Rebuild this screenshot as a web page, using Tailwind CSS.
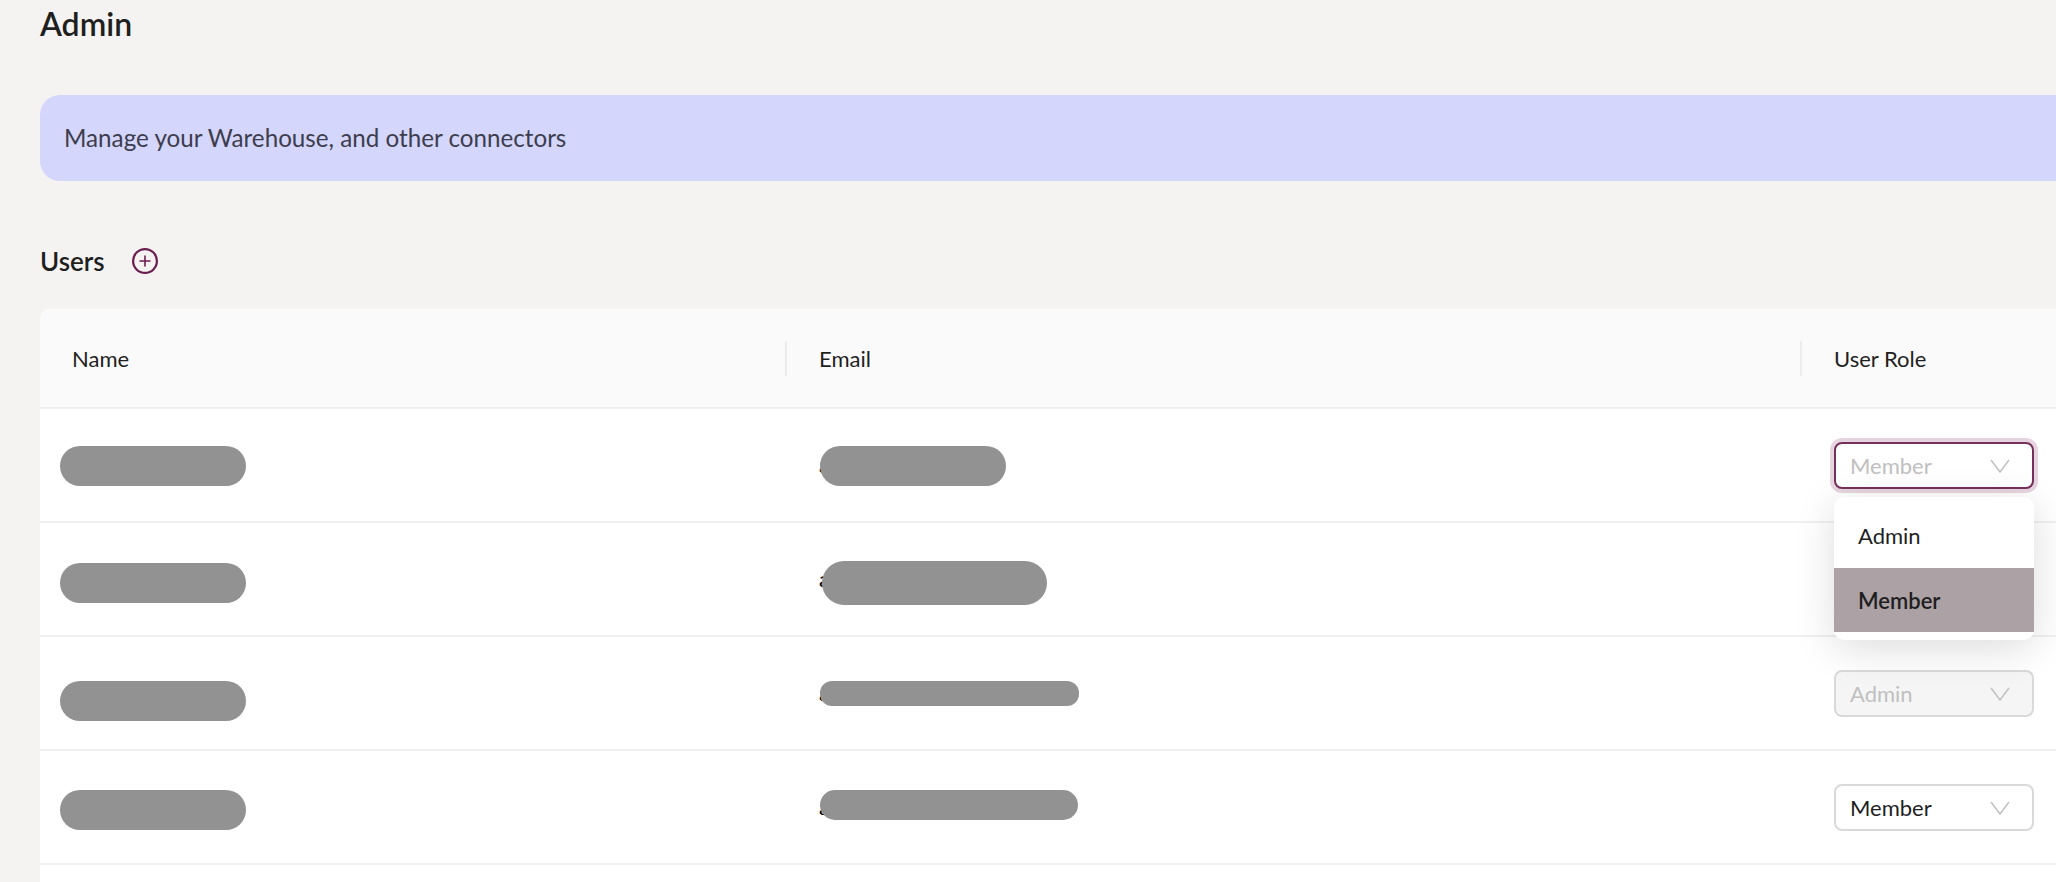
<!DOCTYPE html>
<html lang="en">
  <head>
    <meta charset="UTF-8" />
    <title>Admin</title>
    <script src="https://cdn.jsdelivr.net/npm/@tailwindcss/browser@4"></script>
  </head>
  <body class="h-[882px] overflow-hidden bg-[#f4f3f1] font-['Lato',sans-serif] text-[#1f1f1f]">
    <main class="pl-10 pt-[6px]">
      <h1 class="text-[32px] leading-[36px] font-semibold">Admin</h1>

      <!-- Banner -->
      <div class="mt-[53px] flex h-[86px] items-center rounded-l-[20px] bg-[#d4d6fb] pl-6">
        <p class="text-[24.2px] text-[#3d3d4e]">Manage your Warehouse, and other connectors</p>
      </div>

      <!-- Users heading -->
      <div class="mt-[64px] flex h-[32px] items-center gap-[27px]">
        <h2 class="text-[26px] font-semibold">Users</h2>
        <svg class="h-[26px] w-[26px] text-[#6b1d4f]" viewBox="0 0 26 26" fill="none" stroke="currentColor" stroke-width="2.2">
          <circle cx="13" cy="13" r="11.9" />
          <path stroke-width="1.6" d="M13 7.5v11M7.5 13h11" />
        </svg>
      </div>

      <!-- Table -->
      <div class="mt-[32px] rounded-tl-[10px] bg-white">
        <div class="grid h-[100px] grid-cols-[745px_1015px_1fr] items-center rounded-tl-[10px] border-b-2 border-[#f0f0f0] bg-[#fafafa] text-[22px]">
          <div class="pl-8">Name</div>
          <div class="flex h-[35px] items-center border-l-2 border-[#ececec] pl-8">Email</div>
          <div class="flex h-[35px] items-center border-l-2 border-[#ececec] pl-8">User Role</div>
        </div>

        <!-- Row 1 -->
        <div class="grid h-[114px] grid-cols-[745px_1015px_1fr] items-center border-b-2 border-[#f0f0f0] text-[22px] leading-7">
          <div class="pl-5"><div class="h-10 w-[186px] translate-y-px rounded-[20px] bg-[#929292]"></div></div>
          <div class="relative pl-[34px]">
            <span class="text-black">a</span>
            <div class="absolute left-[35px] top-[-5px] h-10 w-[186px] rounded-[20px] bg-[#929292]"></div>
          </div>
          <div class="pl-[34px]">
            <div class="relative w-[200px]">
              <div class="flex h-[47px] items-center justify-between rounded-lg border-2 border-[#76305c] bg-white pl-[14px] pr-[22px] pt-px text-[#c0c0c0] ring-4 ring-[#e6d5df]">
                Member
                <svg class="h-[14px] w-[20px]" viewBox="0 0 20 14" fill="none" stroke="currentColor" stroke-width="1.5"><path d="M1 1l9 12 9-12" /></svg>
              </div>
              <!-- Open menu -->
              <div class="absolute left-0 top-[55px] z-10 w-[200px] rounded-[10px] bg-white py-2 shadow-[0_8px_40px_rgba(0,0,0,0.14)]">
                <div class="flex h-[63px] items-center pl-6">Admin</div>
                <div class="flex h-[64px] items-center bg-[#aca2a6] pl-6 pt-[2px] font-semibold">Member</div>
              </div>
            </div>
          </div>
        </div>

        <!-- Row 2 -->
        <div class="grid h-[114px] grid-cols-[745px_1015px_1fr] items-center border-b-2 border-[#f0f0f0] text-[22px] leading-7">
          <div class="pl-5"><div class="h-10 w-[186px] translate-y-[4px] rounded-[20px] bg-[#929292]"></div></div>
          <div class="relative pl-[34px]">
            <span class="text-black">a</span>
            <div class="absolute left-[37px] top-[-4px] h-11 w-[225px] rounded-[22px] bg-[#929292]"></div>
          </div>
          <div></div>
        </div>

        <!-- Row 3 -->
        <div class="grid h-[114px] grid-cols-[745px_1015px_1fr] items-center border-b-2 border-[#f0f0f0] text-[22px] leading-7">
          <div class="pl-5"><div class="h-10 w-[186px] translate-y-[8px] rounded-[20px] bg-[#929292]"></div></div>
          <div class="relative pl-[34px]">
            <span class="text-black">a</span>
            <div class="absolute left-[35px] top-[2px] h-[25px] w-[259px] rounded-xl bg-[#929292]"></div>
          </div>
          <div class="pl-[34px]">
            <div class="flex h-[47px] w-[200px] items-center justify-between rounded-lg border-2 border-[#d9d9d9] bg-[#f5f5f5] pl-[14px] pr-[22px] pt-px text-[#c0c0c0]">
              Admin
              <svg class="h-[14px] w-[20px]" viewBox="0 0 20 14" fill="none" stroke="currentColor" stroke-width="1.5"><path d="M1 1l9 12 9-12" /></svg>
            </div>
          </div>
        </div>

        <!-- Row 4 -->
        <div class="grid h-[114px] grid-cols-[745px_1015px_1fr] items-center border-b-2 border-[#f0f0f0] text-[22px] leading-7">
          <div class="pl-5"><div class="h-10 w-[186px] translate-y-[3px] rounded-[20px] bg-[#929292]"></div></div>
          <div class="relative pl-[34px]">
            <span class="text-black">a</span>
            <div class="absolute left-[35px] top-[-3px] h-[30px] w-[258px] rounded-[15px] bg-[#929292]"></div>
          </div>
          <div class="pl-[34px]">
            <div class="flex h-[47px] w-[200px] items-center justify-between rounded-lg border-2 border-[#d9d9d9] bg-white pl-[14px] pr-[22px] pt-px">
              Member
              <svg class="h-[14px] w-[20px] text-[#c0c0c0]" viewBox="0 0 20 14" fill="none" stroke="currentColor" stroke-width="1.5"><path d="M1 1l9 12 9-12" /></svg>
            </div>
          </div>
        </div>

        <div class="h-[40px]"></div>
      </div>
    </main>
  </body>
</html>
